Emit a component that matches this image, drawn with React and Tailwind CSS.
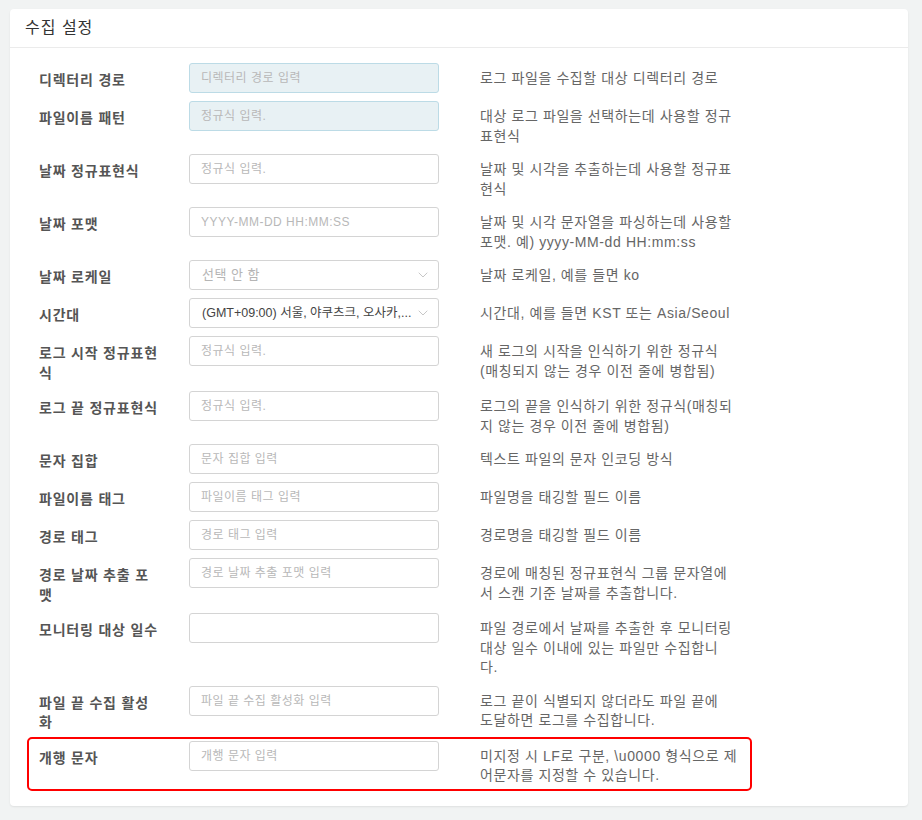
import React from "react";
import { ChevronDown } from "lucide-react";

const FONT = { fontFamily: '"Liberation Sans", "Noto Sans CJK KR", sans-serif' };

const ROWS = [
  { label: "디렉터리 경로", placeholder: "디렉터리 경로 입력", desc: "로그 파일을 수집할 대상 디렉터리 경로", tinted: true },
  { label: "파일이름 패턴", placeholder: "정규식 입력.", desc: "대상 로그 파일을 선택하는데 사용할 정규\n표현식", tinted: true },
  { label: "날짜 정규표현식", placeholder: "정규식 입력.", desc: "날짜 및 시각을 추출하는데 사용할 정규표\n현식" },
  { label: "날짜 포맷", placeholder: "YYYY-MM-DD HH:MM:SS", desc: "날짜 및 시각 문자열을 파싱하는데 사용할\n포맷. 예) yyyy-MM-dd HH:mm:ss" },
  { label: "날짜 로케일", select: "선택 안 함", muted: true, desc: "날짜 로케일, 예를 들면 ko" },
  { label: "시간대", select: "(GMT+09:00) 서울, 야쿠츠크, 오사카,...", desc: "시간대, 예를 들면 KST 또는 Asia/Seoul" },
  { label: "로그 시작 정규표현\n식", placeholder: "정규식 입력.", desc: "새 로그의 시작을 인식하기 위한 정규식\n(매칭되지 않는 경우 이전 줄에 병합됨)" },
  { label: "로그 끝 정규표현식", placeholder: "정규식 입력.", desc: "로그의 끝을 인식하기 위한 정규식(매칭되\n지 않는 경우 이전 줄에 병합됨)" },
  { label: "문자 집합", placeholder: "문자 집합 입력", desc: "텍스트 파일의 문자 인코딩 방식" },
  { label: "파일이름 태그", placeholder: "파일이름 태그 입력", desc: "파일명을 태깅할 필드 이름" },
  { label: "경로 태그", placeholder: "경로 태그 입력", desc: "경로명을 태깅할 필드 이름" },
  { label: "경로 날짜 추출 포\n맷", placeholder: "경로 날짜 추출 포맷 입력", desc: "경로에 매칭된 정규표현식 그룹 문자열에\n서 스캔 기준 날짜를 추출합니다." },
  { label: "모니터링 대상 일수", placeholder: "", desc: "파일 경로에서 날짜를 추출한 후 모니터링\n대상 일수 이내에 있는 파일만 수집합니\n다." },
  { label: "파일 끝 수집 활성\n화", placeholder: "파일 끝 수집 활성화 입력", desc: "로그 끝이 식별되지 않더라도 파일 끝에\n도달하면 로그를 수집합니다." },
];

const LAST = { label: "개행 문자", placeholder: "개행 문자 입력", desc: "미지정 시 LF로 구분, \\u0000 형식으로 제\n어문자를 지정할 수 있습니다." };

function Field({ row }) {
  if (row.select) {
    return (
      <div className="flex h-[30px] w-[250px] shrink-0 items-center justify-between rounded-[3px] border border-[#d4d4d4] bg-white pl-[12px] pr-[7px]">
        <span className={`whitespace-nowrap ${row.muted ? "text-[13px] tracking-[0.5px] text-[#b5b5b5]" : "text-[12.5px] text-[#444]"}`}>
          {row.select}
        </span>
        <ChevronDown size={16} strokeWidth={1} className="shrink-0 text-[#aaa]" />
      </div>
    );
  }
  return (
    <input
      readOnly
      placeholder={row.placeholder}
      className={`h-[30px] w-[250px] shrink-0 rounded-[3px] border px-[11px] text-[12px] tracking-[0.5px] outline-none placeholder:text-[#b8b8b8] ${
        row.tinted ? "border-[#bcdbe6] bg-[#e8f1f4]" : "border-[#d4d4d4] bg-white"
      }`}
      style={FONT}
    />
  );
}

function Row({ row }) {
  return (
    <div className="flex items-start">
      <div className="w-[150px] shrink-0 whitespace-pre pt-[8px] text-[14px] font-bold leading-[19.5px] tracking-[0.8px] text-[#555]">
        {row.label}
      </div>
      <Field row={row} />
      <div className="ml-[41px] w-[290px] whitespace-pre pt-[6px] text-[14px] leading-[19.5px] tracking-[0.6px] text-[#666]">
        {row.desc}
      </div>
    </div>
  );
}

export default function App() {
  return (
    <div className="min-h-[820px] bg-[#f1f3f3] pt-[9px] pl-[10px] pr-[14px]" style={FONT}>
      <div className="rounded-[4px] bg-white pb-[15px] shadow-[0_1px_2px_rgba(0,0,0,0.08)]">
        <div className="border-b border-[#ebebeb] px-[15px] py-[8px] text-[16px] leading-[22px] tracking-[1px] text-[#333]">수집 설정</div>
        <div className="flex flex-col gap-[8px] pt-[15px] pl-[29px]">
          {ROWS.map((r) => (
            <Row key={r.label} row={r} />
          ))}
          <div className="-mt-[4px] -ml-[12px] w-[725px] rounded-[5px] border-2 border-[#ff0000] pt-[2px] pb-[3px] pl-[10px]">
            <Row row={LAST} />
          </div>
        </div>
      </div>
    </div>
  );
}
